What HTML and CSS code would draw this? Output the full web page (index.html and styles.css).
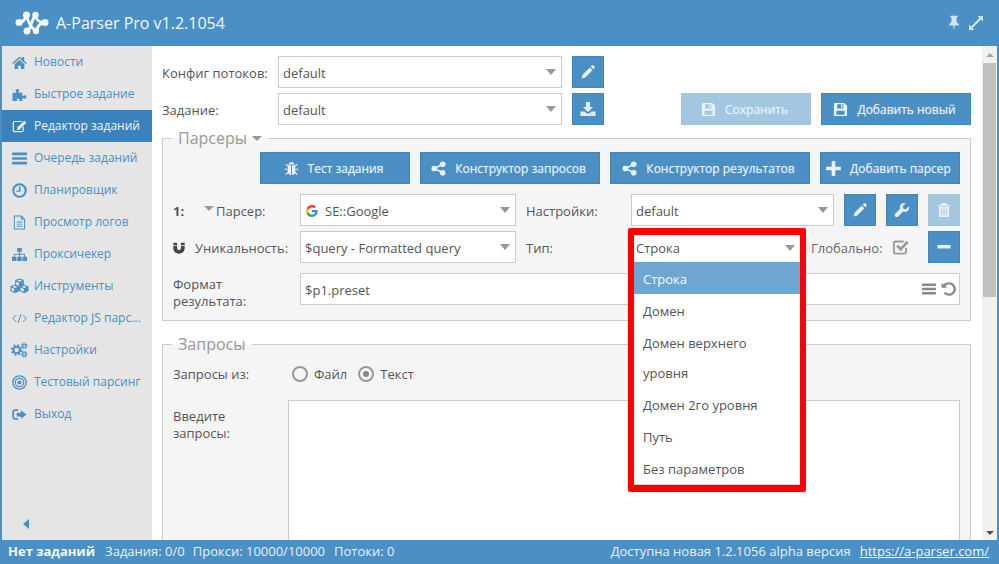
FILE: index.html
```html
<!DOCTYPE html>
<html lang="ru">
<head>
<meta charset="utf-8">
<title>A-Parser</title>
<link rel="stylesheet" href="styles.css">
</head>
<body>
<svg class="defs" width="0" height="0">
  <symbol id="i-home" viewBox="0 0 16 14"><path d="M8 0.8L0.3 7.4l1 1.1L8 2.8l6.7 5.7 1-1.1L13 5.1V1.2h-2.2v2z"/><path d="M8 4.2L2.8 8.6V14h3.7v-3.6h3V14h3.7V8.6z"/></symbol>
  <symbol id="i-puzzle" viewBox="0 0 16 14"><path d="M0.5 5H4c.7 0 .7-.7.3-1.1C3.4 3 4 1 5.8 1s2.4 2 1.5 2.9C6.900 4.300 6.900 5 7.600 5h3.400v3c0 .7.700.7 1.100.3.900-.9 3.400-.6 3.400 1.400s-2.500 2.300-3.400 1.400c-.4-.4-1.100-.4-1.100.3V14H8c-.7 0-.7-.8-.3-1.200.5-.6.300-1.300-.500-1.300H5.800c-.8 0-1 .7-.5 1.300.4.400.4 1.200-.3 1.200H.5z"/></symbol>
  <symbol id="i-edit" viewBox="0 0 16 14"><path d="M3 1h8l-1.300 1.300H3c-.6 0-1 .4-1 1v7.400c0 .6.400 1 1 1h7.400c.6 0 1-.4 1-1V8l1.300-1.300v4c0 1.300-1 2.300-2.300 2.300H3c-1.300 0-2.300-1-2.300-2.300V3.300C.7 2 1.700 1 3 1z"/><path d="M13 .8l2.300 2.300-7 7-3.200.9.900-3.200z"/></symbol>
  <symbol id="i-bars" viewBox="0 0 14 12"><rect y="0.500" width="14" height="2.400" rx=".4"/><rect y="4.800" width="14" height="2.400" rx=".4"/><rect y="9.100" width="14" height="2.400" rx=".4"/></symbol>
  <symbol id="i-clock" viewBox="0 0 14 14"><circle cx="7" cy="7" r="5.800" fill="none" stroke="currentColor" stroke-width="2"/><path d="M6.500 3.200h1.400v5H4V7h2.500z"/></symbol>
  <symbol id="i-file" viewBox="0 0 14 16"><path fill="none" stroke="currentColor" stroke-width="1.100" d="M1.500 1h7.500l3.500 3.500V15h-11zM9 1v3.500h3.500"/><path d="M4 7h6v1H4zM4 9.200h6v1H4zM4 11.400h6v1H4z"/></symbol>
  <symbol id="i-sitemap" viewBox="0 0 16 14"><path d="M5.500 0h5v4H8.600v2.200h5.200V9.500H16V14h-4.800V9.500h1.600V7.200H8.600v2.300h1.800V14H5.600V9.500h2V7.200H3.200v2.300h1.600V14H0V9.500h2.200V6.200h5.400V4H5.500z"/></symbol>
  <symbol id="i-cubes" viewBox="0 0 20 16"><path fill-rule="evenodd" d="M10 0l4.500 1.800v4.600L19.500 8.300v5L15 15.500l-5-2.200-5 2.200-4.500-2.200v-5l5-1.900V1.800zM10 1.300L7 2.400l3 1.200 3-1.200zM5 7.800L2.300 8.900 5 10l2.700-1.100zM15 7.800l-2.700 1.100L15 10l2.700-1.100zM9.500 7.800v-3l-3-1.200v3zM4.500 14V11L1.700 9.900v2.800zM14.500 14V11l-3.300-1.200v3z"/></symbol>
  <symbol id="i-code" viewBox="0 0 18 12"><path fill="none" stroke="currentColor" stroke-width="1.200" d="M5 2L1 6l4 4M13 2l4 4-4 4M10.800 .5L7.200 11.500"/></symbol>
  <symbol id="i-cogs" viewBox="0 0 18 16"><circle cx="6" cy="8" r="3.500" fill="none" stroke="currentColor" stroke-width="2.200"/><circle cx="6" cy="8" r="5.300" fill="none" stroke="currentColor" stroke-width="1.800" stroke-dasharray="2.100 2.060"/><circle cx="14" cy="3.500" r="1.800" fill="none" stroke="currentColor" stroke-width="1.300"/><circle cx="14" cy="3.500" r="3" fill="none" stroke="currentColor" stroke-width="1.100" stroke-dasharray="1.200 1.150"/><circle cx="14" cy="12.500" r="1.800" fill="none" stroke="currentColor" stroke-width="1.300"/><circle cx="14" cy="12.500" r="3" fill="none" stroke="currentColor" stroke-width="1.100" stroke-dasharray="1.200 1.150"/></symbol>
  <symbol id="i-target" viewBox="0 0 14 14"><circle cx="7" cy="7" r="6.200" fill="none" stroke="currentColor" stroke-width="1.300"/><circle cx="7" cy="7" r="3.900" fill="none" stroke="currentColor" stroke-width="1.200"/><circle cx="7" cy="7" r="1.900"/></symbol>
  <symbol id="i-signout" viewBox="0 0 16 14"><path d="M3 1.500h3.500v1.700H3.200c-.6 0-1 .4-1 1v5.600c0 .6.400 1 1 1h3.300v1.700H3c-1.500 0-2.700-1.200-2.700-2.700V4.200C.3 2.700 1.500 1.500 3 1.500z"/><path d="M9.500 2.500L15.500 7l-6 4.500V9H5V5h4.500z"/></symbol>
  <symbol id="i-pencil" viewBox="0 0 16 16"><path d="M9.800 3.600l2.600 2.600-7.200 7.200L1.500 14.500l1.100-3.700z"/><path d="M10.800 2.600l1-1c.5-.5 1.100-.5 1.600 0l1 1c.5.5.5 1.100 0 1.600l-1 1z"/></symbol>
  <symbol id="i-download" viewBox="0 0 16 16"><path d="M6 1h4v5h3l-5 5-5-5h3z"/><path fill-rule="evenodd" d="M.5 10.500h4l2 2h3l2-2h4V15H.5zM11 13v.800h1V13zM13 13v.800h1V13z"/></symbol>
  <symbol id="i-save" viewBox="0 0 16 16"><path fill-rule="evenodd" d="M2 1h10l3 3v10c0 .6-.4 1-1 1H2c-.6 0-1-.4-1-1V2c0-.6.400-1 1-1zM4.500 2.400v4.400h6.500V2.400zM3.700 9.300v4.300h8.600V9.300zM8.500 3h1.500v3H8.500z"/></symbol>
  <symbol id="i-bug" viewBox="0 0 16 16"><path d="M5 3.600C5 2 6.400 1 8 1s3 1 3 2.600z"/><path d="M4 4.600h3.500V15C5.300 14.800 4 13.300 4 11zM8.500 4.600H12V11c0 2.300-1.300 3.800-3.500 4z"/><path fill="none" stroke="currentColor" stroke-width="1.300" d="M4.300 5.500L1.800 3.300M11.700 5.500l2.500-2.200M4 8.800H.6M12 8.800h3.400M4.500 12L1.800 14.500M11.500 12l2.700 2.500"/></symbol>
  <symbol id="i-share" viewBox="0 0 16 16"><circle cx="3.500" cy="8" r="3"/><circle cx="12.500" cy="3.500" r="3"/><circle cx="12.500" cy="12.500" r="3"/><path fill="none" stroke="currentColor" stroke-width="1.600" d="M3.500 8l9-4.500M3.500 8l9 4.500"/></symbol>
  <symbol id="i-plus" viewBox="0 0 14 14"><path d="M5.300 .5c0-.2.200-.4.400-.4h2.600c.2 0 .4.200.4.400v4.800h4.800c.2 0 .4.200.4.400v2.600c0 .2-.2.400-.4.400H8.700v4.800c0 .2-.2.400-.4.400H5.700c-.2 0-.4-.2-.4-.4V8.700H.5c-.2 0-.4-.2-.4-.4V5.700c0-.2.200-.4.400-.4h4.800z"/></symbol>
  <symbol id="i-wrench" viewBox="0 0 16 16"><path d="M15 4.300l-3 3-2.600-.6-.6-2.600 3-3C9.300.5 6.700 1.500 6 4.100c-.3 1-.1 2 .2 2.700L1.300 11.700c-.8.800-.8 2 0 2.800s2 .8 2.800 0l4.900-4.900c.8.300 1.800.5 2.800.2 2.600-.7 3.900-3.200 3.200-5.500z"/></symbol>
  <symbol id="i-trash" viewBox="0 0 16 16"><path d="M6 1h4l.8 1.800H14v1.400H2V2.800h3.200z"/><path fill-rule="evenodd" d="M3 5h10v9c0 .6-.4 1-1 1H4c-.6 0-1-.4-1-1zM5.200 6.500v7h1v-7zM7.500 6.500v7h1v-7zM9.800 6.500v7h1v-7z"/></symbol>
  <symbol id="i-minus" viewBox="0 0 14 14"><rect x="0.500" y="5" width="13" height="3.400" rx=".5"/></symbol>
  <symbol id="i-magnet" viewBox="0 0 12 12"><path d="M.3 .8h3.800v2.300H.3zM7.900 .8h3.800v2.300H7.900z"/><path d="M.3 3.800h3.800V6c0 1.400.7 2 1.900 2s1.900-.6 1.900-2V3.800h3.800V6c0 3.500-2.500 5.700-5.700 5.700S.3 9.500.3 6z"/></symbol>
  <symbol id="i-check" viewBox="1 1 15 14"><path fill="none" stroke="currentColor" stroke-width="1.800" d="M13.200 9v3.500c0 1-.7 1.700-1.700 1.700h-8c-1 0-1.700-.7-1.700-1.700v-8c0-1 .7-1.700 1.700-1.700H11"/><path d="M4 7.500l1.800-1.700 2.400 2.400 5.600-6 1.900 1.700L8.200 12z"/></symbol>
  <symbol id="i-undo" viewBox="0 0 14 14"><path d="M.5 1.500l1.500 1.500C3.200 1.800 4.900 1 7 1c3.400 0 6.100 2.700 6.100 6s-2.700 6-6.100 6c-1.900 0-3.600-.9-4.700-2.200l1.500-1.400C4.500 10.400 5.700 11 7 11c2.200 0 4-1.800 4-4s-1.800-4-4-4c-1.300 0-2.400.5-3.200 1.400L5.400 6H.5z"/></symbol>
  <symbol id="i-pin" viewBox="0 0 12 16"><path d="M2.300 .8h7.400v1.500H8.600v5c1.400.7 2.400 1.800 2.400 3.100H6.700L6 15.500l-.7-5.100H1c0-1.300 1-2.400 2.400-3.100v-5H2.300z"/></symbol>
  <symbol id="i-expand" viewBox="0 0 16 16"><path d="M9.500 1H15v5.500l-2-2-8.500 8.500 2 2H1V9.500l2 2L11.500 3z"/></symbol>
  <symbol id="i-google" viewBox="0 0 48 48">
    <path fill="#EA4335" d="M24 9.500c3.540 0 6.710 1.220 9.210 3.600l6.850-6.850C35.900 2.380 30.470 0 24 0 14.620 0 6.510 5.380 2.560 13.220l7.980 6.190C12.430 13.720 17.740 9.500 24 9.500z"/>
    <path fill="#4285F4" d="M46.980 24.550c0-1.570-.15-3.090-.38-4.550H24v9.020h12.940c-.58 2.960-2.260 5.480-4.780 7.180l7.730 6c4.510-4.180 7.090-10.360 7.090-17.650z"/>
    <path fill="#FBBC05" d="M10.530 28.590c-.48-1.450-.76-2.990-.76-4.590s.27-3.140.76-4.590l-7.980-6.190C.92 16.460 0 20.120 0 24c0 3.880.92 7.540 2.560 10.780l7.970-6.190z"/>
    <path fill="#34A853" d="M24 48c6.480 0 11.930-2.130 15.890-5.810l-7.730-6c-2.150 1.450-4.920 2.300-8.160 2.300-6.260 0-11.570-4.220-13.470-9.910l-7.980 6.190C6.510 42.620 14.620 48 24 48z"/>
  </symbol>
</svg>

<div class="app">
  <header class="topbar">
    <svg class="logo" viewBox="0 0 34 24" width="34" height="24">
      <path class="logo-line" d="M4 11.500C8 11.500 10 9 11.500 4c1 6 4 12 9.500 16M12 20c3-1 4-6 5-9 1-3 2-5.500 3.500-7 0 4 3 7.500 9.500 7.500-4 0-7 3-9 8.500"/>
      <circle cx="4" cy="11.500" r="3.500"/><circle cx="11.500" cy="4" r="3.500"/><circle cx="20.500" cy="4" r="3.200"/>
      <circle cx="30" cy="11.500" r="3.500"/><circle cx="12" cy="20" r="3.500"/><circle cx="21" cy="20" r="3.200"/>
    </svg>
    <span class="brand">A-Parser Pro v1.2.1054</span>
    <span class="top-tools">
      <svg class="ic-pin"><use href="#i-pin"/></svg>
      <svg class="ic-expand"><use href="#i-expand"/></svg>
    </span>
  </header>

  <div class="middle">
    <nav class="sidebar">
      <a class="nav-item"><span class="nav-ic"><svg class="s15"><use href="#i-home"/></svg></span><span class="nav-tx">Новости</span></a>
      <a class="nav-item"><span class="nav-ic"><svg class="s15"><use href="#i-puzzle"/></svg></span><span class="nav-tx">Быстрое задание</span></a>
      <a class="nav-item active"><span class="nav-ic"><svg class="s15"><use href="#i-edit"/></svg></span><span class="nav-tx">Редактор заданий</span></a>
      <a class="nav-item"><span class="nav-ic"><svg class="s15"><use href="#i-bars"/></svg></span><span class="nav-tx">Очередь заданий</span></a>
      <a class="nav-item"><span class="nav-ic"><svg class="s15"><use href="#i-clock"/></svg></span><span class="nav-tx">Планировщик</span></a>
      <a class="nav-item"><span class="nav-ic"><svg class="s15"><use href="#i-file"/></svg></span><span class="nav-tx">Просмотр логов</span></a>
      <a class="nav-item"><span class="nav-ic"><svg class="s15"><use href="#i-sitemap"/></svg></span><span class="nav-tx">Проксичекер</span></a>
      <a class="nav-item"><span class="nav-ic"><svg class="s19"><use href="#i-cubes"/></svg></span><span class="nav-tx">Инструменты</span></a>
      <a class="nav-item"><span class="nav-ic"><svg class="s15"><use href="#i-code"/></svg></span><span class="nav-tx">Редактор JS парс...</span></a>
      <a class="nav-item"><span class="nav-ic"><svg class="s17"><use href="#i-cogs"/></svg></span><span class="nav-tx">Настройки</span></a>
      <a class="nav-item"><span class="nav-ic"><svg class="s15"><use href="#i-target"/></svg></span><span class="nav-tx">Тестовый парсинг</span></a>
      <a class="nav-item"><span class="nav-ic"><svg class="s15"><use href="#i-signout"/></svg></span><span class="nav-tx">Выход</span></a>
      <span class="collapse"></span>
    </nav>

    <main class="content">
      <div class="form">
        <div class="top-row">
          <label class="top-label">Конфиг потоков:</label>
          <div class="select sel-top"><span>default</span><i class="caret"></i></div>
          <button class="btn btn-sq"><svg class="s16"><use href="#i-pencil"/></svg></button>
        </div>
        <div class="top-row top-row-last">
          <label class="top-label">Задание:</label>
          <div class="select sel-top"><span>default</span><i class="caret"></i></div>
          <button class="btn btn-sq"><svg class="s16"><use href="#i-download"/></svg></button>
          <button class="btn btn-off w130 push"><svg class="s15"><use href="#i-save"/></svg>Сохранить</button>
          <button class="btn w150"><svg class="s15"><use href="#i-save"/></svg>Добавить новый</button>
        </div>

        <fieldset class="panel panel-parsers">
          <legend>Парсеры<i class="caret legend-caret"></i></legend>
          <div class="action-row">
            <button class="btn w150"><svg class="s15"><use href="#i-bug"/></svg>Тест задания</button>
            <button class="btn w180"><svg class="s15"><use href="#i-share"/></svg>Конструктор запросов</button>
            <button class="btn w200"><svg class="s15"><use href="#i-share"/></svg>Конструктор результатов</button>
            <button class="btn w140"><svg class="s15"><use href="#i-plus"/></svg>Добавить парсер</button>
          </div>

          <div class="p-row">
            <div class="p-label"><b class="num">1:</b><i class="caret small-caret"></i><span>Парсер:</span></div>
            <div class="select sel-main"><span class="g-wrap"><svg class="g-ic"><use href="#i-google"/></svg>SE::Google</span><i class="caret"></i></div>
            <label class="p-label2">Настройки:</label>
            <div class="select sel-set"><span>default</span><i class="caret"></i></div>
            <button class="btn btn-sq"><svg class="s16"><use href="#i-pencil"/></svg></button>
            <button class="btn btn-sq"><svg class="s16"><use href="#i-wrench"/></svg></button>
            <button class="btn btn-sq btn-off"><svg class="s16"><use href="#i-trash"/></svg></button>
          </div>

          <div class="p-row">
            <div class="p-label"><svg class="magnet"><use href="#i-magnet"/></svg><span>Уникальность:</span></div>
            <div class="select sel-main"><span>$query - Formatted query</span><i class="caret"></i></div>
            <label class="p-label2">Тип:</label>
            <div class="select sel-type">
              <div class="popup">
                <div class="popup-head"><span>Строка</span><i class="caret"></i></div>
                <ul class="options">
                  <li class="current">Строка</li>
                  <li>Домен</li>
                  <li>Домен верхнего уровня</li>
                  <li>Домен 2го уровня</li>
                  <li>Путь</li>
                  <li>Без параметров</li>
                </ul>
              </div>
            </div>
            <label class="global">Глобально:</label>
            <svg class="check"><use href="#i-check"/></svg>
            <button class="btn btn-sq push"><svg class="s14"><use href="#i-minus"/></svg></button>
          </div>

          <div class="p-row p-row-last">
            <label class="p-label p-label-two">Формат<br>результата:</label>
            <div class="select sel-input">
              <span>$p1.preset</span>
              <span class="input-tools">
                <svg class="tool-bars"><use href="#i-bars"/></svg>
                <svg class="tool-undo"><use href="#i-undo"/></svg>
              </span>
            </div>
          </div>
        </fieldset>

        <fieldset class="panel panel-queries">
          <legend>Запросы</legend>
          <div class="radio-row">
            <label class="q-label">Запросы из:</label>
            <span class="radio"></span><span class="radio-tx">Файл</span>
            <span class="radio on"></span><span class="radio-tx">Текст</span>
          </div>
          <div class="q-row">
            <label class="q-label2">Введите<br>запросы:</label>
            <div class="textarea"></div>
          </div>
        </fieldset>
      </div>

      <div class="scrollbar">
        <span class="sb-btn"><i class="sb-up"></i></span>
        <span class="sb-thumb"></span>
        <span class="sb-btn sb-end"><i class="sb-down"></i></span>
      </div>
    </main>
  </div>

  <footer class="statusbar">
    <b>Нет заданий</b>
    <span class="st1">Задания: 0/0</span>
    <span class="st2">Прокси: 10000/10000</span>
    <span class="st3">Потоки: 0</span>
    <span class="st-right">Доступна новая 1.2.1056 alpha версия</span>
    <a class="st-link">https://a-parser.com/</a>
  </footer>
</div>
</body>
</html>
```
FILE: styles.css
```css
* { box-sizing: border-box; }
html, body { margin: 0; height: 100%; overflow: hidden; }
body { font-family: "Open Sans", sans-serif; font-size: 13px; color: #555; background: #fff; }
.defs { position: absolute; }
svg { fill: currentColor; flex: none; display: block; }

.app { height: 564px; display: flex; flex-direction: column; }

.topbar { height: 46px; flex: none; background: #4a90c4; color: #fff; display: flex; align-items: center; padding-left: 15px; }
.logo { fill: #f4f8fb; margin-right: 7px; }
.logo-line { fill: none; stroke: #f4f8fb; stroke-width: 2.8; }
.brand { font-size: 16px; color: #f2f7fb; }
.top-tools { margin-left: auto; margin-right: 15px; display: flex; align-items: center; gap: 8px; color: #d3e5f2; }
.ic-pin { width: 12px; height: 16px; }
.ic-expand { width: 16px; height: 16px; }

.middle { flex: 1; min-height: 0; display: flex; border-left: 2px solid #4a90c4; border-right: 2px solid #4a90c4; }

.sidebar { width: 150px; flex: none; background: #e5e5e5; display: flex; flex-direction: column; }
.nav-item { height: 32px; flex: none; display: flex; align-items: center; padding: 0 5px 0 0; color: #4a90c4; font-size: 12px; }
.nav-item.active { background: #3a82bb; color: #eef5fa; }
.nav-ic { width: 32px; flex: none; display: flex; justify-content: center; padding-left: 3px; }
.nav-tx { white-space: nowrap; padding-bottom: 2px; }
.s14 { width: 14px; height: 14px; }
.s15 { width: 15px; height: 15px; }
.s16 { width: 16px; height: 16px; }
.s17 { width: 17px; height: 16px; }
.s19 { width: 19px; height: 16px; }
.collapse { margin: auto 0 11px 21px; width: 0; height: 0; border-style: solid; border-width: 5px 6px 5px 0; border-color: transparent #4a90c4 transparent transparent; }

.content { flex: 1; min-width: 0; display: flex; background: #fff; }
.form { flex: 1; min-width: 0; padding: 10px 11px 0 10px; overflow: hidden; }

.top-row { display: flex; align-items: center; height: 32px; margin-bottom: 5px; }
.top-row-last { margin-bottom: 2px; }
.top-label { width: 116px; flex: none; padding-top: 2px; }
.sel-top { width: 284px; margin-right: 10px; }
.push { margin-left: auto; }
.w130 { width: 130px; margin-right: 10px; }
.w150 { width: 150px; }
.w180 { width: 180px; }
.w200 { width: 200px; }
.w140 { width: 140px; }

.select { height: 32px; flex: none; background: #fff; border: 1px solid #ccc; display: flex; align-items: center; justify-content: space-between; padding: 2px 5px 0 4px; position: relative; }
.select .caret { margin-top: -2px; }
.caret { display: block; flex: none; width: 0; height: 0; border-style: solid; border-width: 6px 5px 0; border-color: #999 transparent transparent; }

.btn { height: 32px; background: #4a90c4; color: #eaf2f8; border: 1px solid #4285b8; font: 400 12px "Open Sans", sans-serif; text-shadow: 0 0 1px rgba(255,255,255,.45); white-space: nowrap; display: flex; align-items: center; justify-content: center; gap: 9px; padding: 0 3px 0 0; flex: none; }
.btn-sq { width: 32px; padding: 0; }
.btn-off { background: #a4c7e1; border-color: #a4c7e1; }

.panel { margin: 0; min-width: 0; border: 1px solid #ccc; background: #f5f5f5; padding: 3px 10px 0; width: 809px; }
.panel legend { font-size: 16px; line-height: 22px; color: #999; padding: 0 6px; margin-left: -1px; display: flex; align-items: center; }
.panel-parsers { padding-bottom: 15px; }
.panel-queries { margin-top: 12px; height: 300px; }
.legend-caret { margin-left: 5px; border-width: 5px 5px 0; }

.action-row { display: flex; justify-content: flex-end; gap: 10px; margin-bottom: 10px; }

.p-row { display: flex; align-items: center; height: 32px; margin-bottom: 5px; }
.p-row-last { margin: 10px 0 0; }
.p-label { width: 127px; flex: none; display: flex; align-items: center; line-height: 17px; padding-top: 2px; }
label.p-label { display: block; }
label.p-label-two { padding-top: 8px; }
.num { width: 31px; font-weight: 700; }
.small-caret { border-width: 5px 5px 0; margin-right: 2px; margin-top: -6px; }
.magnet { width: 12px; height: 12px; margin-right: 10px; color: #444; }
.sel-main { width: 216px; }
.p-label2 { width: 115px; flex: none; padding: 2px 0 0 10px; }
.sel-set { width: 203px; margin-right: 10px; }
.p-row .btn-sq + .btn-sq { margin-left: 10px; }
.sel-type { width: 170px; margin-right: 10px; }
.global { margin-right: 10px; padding-top: 1px; color: #666; }
.check { width: 16px; height: 16px; color: #999; }
.g-wrap { display: flex; align-items: center; }
.g-ic { width: 12px; height: 12px; margin: 0 7px 0 1px; }
.sel-input { width: 660px; padding-right: 2px; }
.input-tools { display: flex; align-items: center; gap: 5px; color: #888; margin-top: -2px; }
.tool-bars { width: 14px; height: 12px; }
.tool-undo { width: 16px; height: 16px; }

.popup { position: absolute; left: -4px; top: -4px; width: 178px; height: 264px; border: 6px solid #f00; border-width: 7px 6px; border-radius: 2px; background: #fff; z-index: 2; }
.popup-head { height: 27px; display: flex; align-items: center; justify-content: space-between; padding: 0 5px 1px 2px; }
.popup-head .caret { margin-top: 0; }
.options { list-style: none; margin: 0; padding: 0; border-bottom: 1px solid #ccc; }
.options li { padding: 2px 9px 0; line-height: 30px; }
.options li.current { background: #6ea6d0; color: #f5f9fc; }

.radio-row { display: flex; align-items: center; height: 32px; }
.q-label { width: 119px; flex: none; }
.radio { width: 16px; height: 16px; border: 2px solid #999; border-radius: 50%; flex: none; position: relative; }
.radio.on::after { content: ""; position: absolute; left: 3px; top: 3px; width: 6px; height: 6px; border-radius: 50%; background: #888; }
.radio-tx { margin: 0 11px 0 6px; }
.q-row { display: flex; margin-top: 10px; }
.q-label2 { width: 115px; flex: none; line-height: 17px; padding-top: 8px; }
.textarea { flex: 1; height: 240px; background: #fff; border: 1px solid #ccc; }

.scrollbar { width: 15px; flex: none; background: #f1f1f1; display: flex; flex-direction: column; align-items: center; }
.sb-btn { height: 17px; width: 100%; flex: none; display: flex; align-items: center; justify-content: center; background: #f1f1f1; }
.sb-end { margin-top: auto; height: 14px; }
.sb-up { width: 0; height: 0; border-style: solid; border-width: 0 4px 4px; border-color: transparent transparent #a3a3a3; }
.sb-down { width: 0; height: 0; border-style: solid; border-width: 4px 4px 0; border-color: #505050 transparent transparent; }
.sb-thumb { width: 13px; height: 234px; background: #c1c1c1; flex: none; }

.statusbar { height: 24px; flex: none; background: #4a90c4; color: #e6f0f7; display: flex; align-items: center; padding: 0 10px 2px 8px; white-space: nowrap; }
.statusbar b { color: #f2f7fb; font-weight: 700; }
.st1 { margin-left: 10px; }
.st2 { margin-left: 8px; }
.st3 { margin-left: 9px; }
.st-right { margin-left: auto; }
.st-link { margin-left: 9px; color: #f2f7fb; text-decoration: underline; }
```
